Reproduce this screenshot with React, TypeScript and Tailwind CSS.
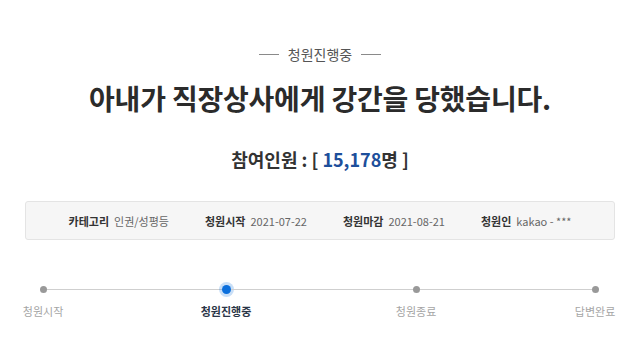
import React from "react";

const font = { fontFamily: '"Noto Sans CJK KR", "Noto Sans", sans-serif' };

function Step({ label, active, first, last }: { label: string; active?: boolean; first?: boolean; last?: boolean }) {
  return (
    <div className="flex w-10 flex-col items-center">
      <div className="flex h-2 w-full items-center">
        <div className={"h-px flex-1 " + (first ? "bg-transparent" : "bg-[#cfcfcf]")} />
        {active ? (
          <div className="h-[9px] w-[9px] rounded-full bg-[#0b6fdc] shadow-[0_0_0_3px_rgba(11,111,220,0.22)]" />
        ) : (
          <div className="h-[7px] w-[7px] rounded-full bg-[#999999]" />
        )}
        <div className={"h-px flex-1 " + (last ? "bg-transparent" : "bg-[#cfcfcf]")} />
      </div>
      <div
        className={
          "mt-[10px] whitespace-nowrap text-[11px] leading-4 " +
          (active ? "font-bold text-[#2a3547]" : "text-[#a5a5a5]")
        }
      >
        {label}
      </div>
    </div>
  );
}

function Line({ cls }: { cls: string }) {
  return <div className={"mt-[3.5px] h-px basis-0 self-start bg-[#cfcfcf] " + cls} />;
}

export default function App() {
  return (
    <div className="h-[363px] w-[640px] overflow-hidden bg-white text-[#333]" style={font}>
      <div className="flex items-center justify-center pt-[44px]">
        <div className="h-px w-5 bg-[#8a8a8a]" />
        <div className="mx-[9px] text-[14px] leading-5 text-[#555]">청원진행중</div>
        <div className="h-px w-5 bg-[#8a8a8a]" />
      </div>
      <h1 className="mt-[16px] text-center text-[28px] font-bold leading-9 tracking-[-0.2px] text-[#2b2b2b]">
        아내가 직장상사에게 강간을 당했습니다.
      </h1>
      <div className="mt-[30px] text-center text-[18px] font-bold leading-[26px] text-[#333]">
        참여인원 : [ <span className="text-[#1d4f9b]">15,178</span>명 ]
      </div>
      <div className="mx-[25px] mt-[29px] flex h-[39px] items-center justify-center gap-[36px] rounded-[3px] border border-[#e4e4e4] bg-[#f6f6f6] text-[11px] leading-4">
        <div className="flex gap-[5px]">
          <span className="font-bold text-[#333]">카테고리</span>
          <span className="text-[#666]">인권/성평등</span>
        </div>
        <div className="flex gap-[5px]">
          <span className="font-bold text-[#333]">청원시작</span>
          <span className="text-[#666]">2021-07-22</span>
        </div>
        <div className="flex gap-[5px]">
          <span className="font-bold text-[#333]">청원마감</span>
          <span className="text-[#666]">2021-08-21</span>
        </div>
        <div className="flex gap-[5px]">
          <span className="font-bold text-[#333]">청원인</span>
          <span className="text-[#666]">kakao - ***</span>
        </div>
      </div>
      <div className="ml-[23px] mr-[25px] mt-[45px] flex items-start">
        <Step label="청원시작" first />
        <Line cls="grow-[143]" />
        <Step label="청원진행중" active />
        <Line cls="grow-[150]" />
        <Step label="청원종료" />
        <Line cls="grow-[139]" />
        <Step label="답변완료" last />
      </div>
    </div>
  );
}
